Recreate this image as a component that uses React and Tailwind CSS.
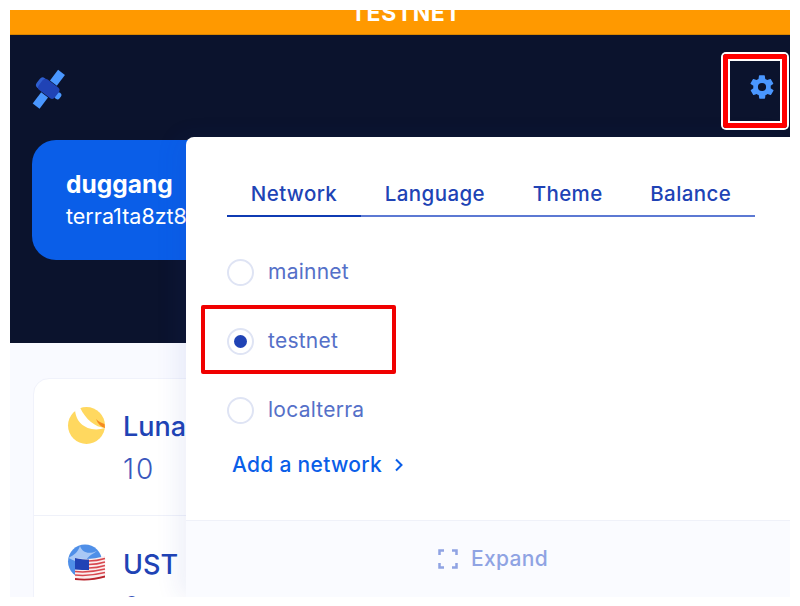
import { useState } from 'react';

const tabs = ['Network', 'Language', 'Theme', 'Balance'];
const networks = ['mainnet', 'testnet', 'localterra'];

function SatelliteIcon() {
  return (
    <svg width="44" height="44" viewBox="0 0 36 36" fill="none">
      <g transform="rotate(37 18 18)">
        <rect x="14.500" y="1" width="7" height="11" fill="#4a97ff" />
        <rect x="14.500" y="24" width="7" height="11.500" fill="#4a97ff" />
        <rect x="7" y="13" width="6" height="10" rx="3" fill="#2f5fd0" />
        <rect x="25" y="15" width="4.500" height="6" rx="2.200" fill="#4a97ff" />
        <rect x="9.500" y="12.500" width="16.500" height="11" rx="3" fill="#2043b5" />
      </g>
    </svg>
  );
}

function GearIcon() {
  return (
    <svg width="28" height="28" viewBox="0 0 24 24" fill="#4a97ff">
      <path d="M19.4 13c.1-.3.1-.7.1-1s0-.7-.1-1l2.100-1.600c.2-.2.2-.4.1-.6l-2-3.500c-.1-.2-.4-.3-.6-.2l-2.500 1c-.5-.4-1.100-.7-1.700-1l-.4-2.700c0-.2-.2-.4-.5-.4h-4c-.2 0-.4.2-.5.4l-.4 2.700c-.6.2-1.200.6-1.700 1l-2.500-1c-.2-.1-.5 0-.6.2l-2 3.500c-.1.2-.1.5.1.6L4.600 11c0 .3-.1.7-.1 1s0 .7.1 1l-2.100 1.600c-.2.2-.2.4-.1.6l2 3.500c.1.2.4.3.6.2l2.500-1c.5.4 1.100.7 1.700 1l.4 2.700c0 .2.2.4.5.4h4c.2 0 .4-.2.5-.4l.4-2.700c.6-.2 1.200-.6 1.700-1l2.500 1c.2.1.5 0 .6-.2l2-3.500c.1-.2.1-.5-.1-.6L19.400 13zM12 15.500a3.500 3.500 0 1 1 0-7 3.500 3.500 0 0 1 0 7z" />
    </svg>
  );
}

function LunaIcon() {
  return (
    <svg width="40" height="38" viewBox="0 0 40 38">
      <circle cx="19.500" cy="18.500" r="18.500" fill="#ffd85f" />
      <path d="M8 1.500 C8 17 22 26 38 21 C28 20 19 13 13 .5 Z" fill="#ffffff" />
      <path d="M29 12 C32 15 35 16 37.500 17 L38 21 C34 20 31 17 29 12 Z" fill="#f58a1f" />
    </svg>
  );
}

function UstIcon() {
  return (
    <svg width="40" height="38" viewBox="0 0 40 38">
      <circle cx="18" cy="17.500" r="17" fill="#4f8fe8" />
      <path d="M1.500 14 C7 11 11 8 13 2 C15 8 21 11 30 7 C24 11 20 13 19 17 L8 17 Z" fill="#a9c8f5" />
      <path d="M8 14 C18 16 28 15 38 12 L38 33 C28 36 18 37 8 36 Z" fill="#fbeeee" />
      <g stroke="#d8474e" strokeWidth="1.500" fill="none">
        <path d="M22 17 C28 17 33 16 38 14.500" />
        <path d="M22 20.500 C28 20.500 33 19.500 38 18" />
        <path d="M22 24 C28 24 33 23 38 21.500" />
        <path d="M8 27.500 C18 28.500 28 27.500 38 25" />
        <path d="M8 31 C18 32 28 31 38 28.500" />
      </g>
      <path d="M8 34 C18 35.500 28 34.500 38 31.500 L38 33.500 C28 36.500 18 37 8 36 Z" fill="#b8242c" />
      <path d="M8 14 C13 15 18 15.500 22 15.500 L22 26 C17 26 13 26 8 25.500 Z" fill="#2043b5" />
    </svg>
  );
}

function ExpandIcon() {
  return (
    <svg width="20" height="20" viewBox="0 0 20 20" fill="none" stroke="#8fa3e3" strokeWidth="2.500">
      <path d="M1.500 6V1.500H6M14 1.500h4.500V6M18.500 14v4.500H14M6 18.500H1.500V14" />
    </svg>
  );
}

export default function App() {
  const [network, setNetwork] = useState('testnet');

  return (
    <div className="h-[606px] w-[800px] overflow-hidden bg-white px-[10px] pt-[10px] pb-[9px] font-['Inter',sans-serif]">
      <div className="relative flex h-full flex-col overflow-hidden bg-[#f9faff]">
        {/* testnet banner, text cut off by the crop */}
        <div className="flex h-[25px] shrink-0 items-end justify-center border-b border-[#d98500] bg-[#ff9900] pl-[12px]">
          <span className="relative top-[-9px] text-[23px] leading-[24px] font-bold tracking-wide text-white">TESTNET</span>
        </div>

        {/* navy header */}
        <div className="h-[308px] shrink-0 bg-[#0b132d] px-[22px] pt-[32px]">
          <div className="flex items-start justify-between">
            <div className="-ml-[5px]">
              <SatelliteIcon />
            </div>
            <div className="mt-[6px] -mr-[8px]">
              <GearIcon />
            </div>
          </div>
          <div className="mt-[29px] h-[120px] rounded-[24px] bg-[#0a5ee8] pt-[29px] pl-[34px] text-white">
            <p className="text-[24.500px] leading-[30px] font-bold">duggang</p>
            <p className="mt-[4px] text-[21.500px] leading-[26px]">terra1ta8zt8</p>
          </div>
        </div>

        {/* asset list */}
        <div className="mx-[23px] mt-[35px] flex-1 rounded-t-[16px] border border-[#f0f2fb] bg-white">
          <div className="flex h-[137px] gap-[16px] border-b border-[#eff1f9] pt-[28px] pl-[33px]">
            <LunaIcon />
            <div className="pt-[2px] text-[#2043b5]">
              <p className="text-[27px] leading-[36px] font-medium">Luna</p>
              <p className="mt-[7px] text-[28px] leading-[34px] font-light tracking-[2px] text-[#3a57bd]">10</p>
            </div>
          </div>
          <div className="flex gap-[16px] pt-[28px] pl-[33px]">
            <UstIcon />
            <div className="pt-[3px] text-[#2043b5]">
              <p className="text-[27px] leading-[36px] font-medium">UST</p>
              <p className="mt-[7px] text-[28px] leading-[34px] font-light text-[#3a57bd]">0</p>
            </div>
          </div>
        </div>

        {/* settings popover */}
        <div className="absolute top-[127px] left-[176px] flex h-[460px] w-[604px] flex-col rounded-tl-[8px] bg-white shadow-[-8px_0_24px_rgba(32,67,181,0.08)]">
          <div className="flex-1 pt-[31px] pl-[41px]">
            <div className="flex h-[49px] w-[528px] border-b-2 border-[#5c79d3]">
              {tabs.map((tab, i) => (
                <button
                  key={tab}
                  className={
                    i === 0
                      ? "-mb-[2px] flex-auto border-b-2 border-[#0f3bb3] pt-[5px] text-[20.500px] font-medium tracking-[0.4px] text-[#2043b5]"
                      : "flex-auto pt-[5px] text-[20.500px] font-medium tracking-[0.4px] text-[#2043b5]"
                  }
                >
                  {tab}
                </button>
              ))}
            </div>

            <div className="mt-[41px] flex flex-col gap-[41px]">
              {networks.map((name) => (
                <label key={name} className="flex h-[28px] items-center gap-[14px]" onClick={() => setNetwork(name)}>
                  <span className="flex size-[27px] items-center justify-center rounded-full border-2 border-[#dfe4f4] bg-white">
                    {network === name && <span className="size-[13px] rounded-full bg-[#2043b5]" />}
                  </span>
                  <span className="text-[21px] tracking-[0.25px] text-[#5570c8]">{name}</span>
                </label>
              ))}
            </div>

            <button className="mt-[25px] ml-[5px] flex items-center gap-[12px] text-[21px] font-medium tracking-[0.3px] text-[#0a5ee8]">
              Add a network
              <svg width="10" height="14" viewBox="0 0 10 14" fill="none" stroke="#0a5ee8" strokeWidth="2">
                <path d="M2 1.500 7.500 7 2 12.500" />
              </svg>
            </button>
          </div>

          <div className="flex h-[77px] shrink-0 items-center justify-center gap-[13px] border-t border-[#eff1f9] bg-[#fafbff] pl-[10px] text-[21px] font-medium tracking-[0.3px] text-[#8fa3e3]">
            <ExpandIcon />
            Expand
          </div>
        </div>

        {/* tutorial highlight boxes */}
        <div className="absolute top-[44px] left-[713px] h-[74px] w-[64px] rounded-[3px] border-[5px] border-[#ff0000] shadow-[0_0_0_2px_#fff,inset_0_0_0_2px_#fff]" />
        <div className="absolute top-[295px] left-[191px] h-[69px] w-[195px] rounded-[2px] border-[4px] border-[#f00000]" />
      </div>
    </div>
  );
}
